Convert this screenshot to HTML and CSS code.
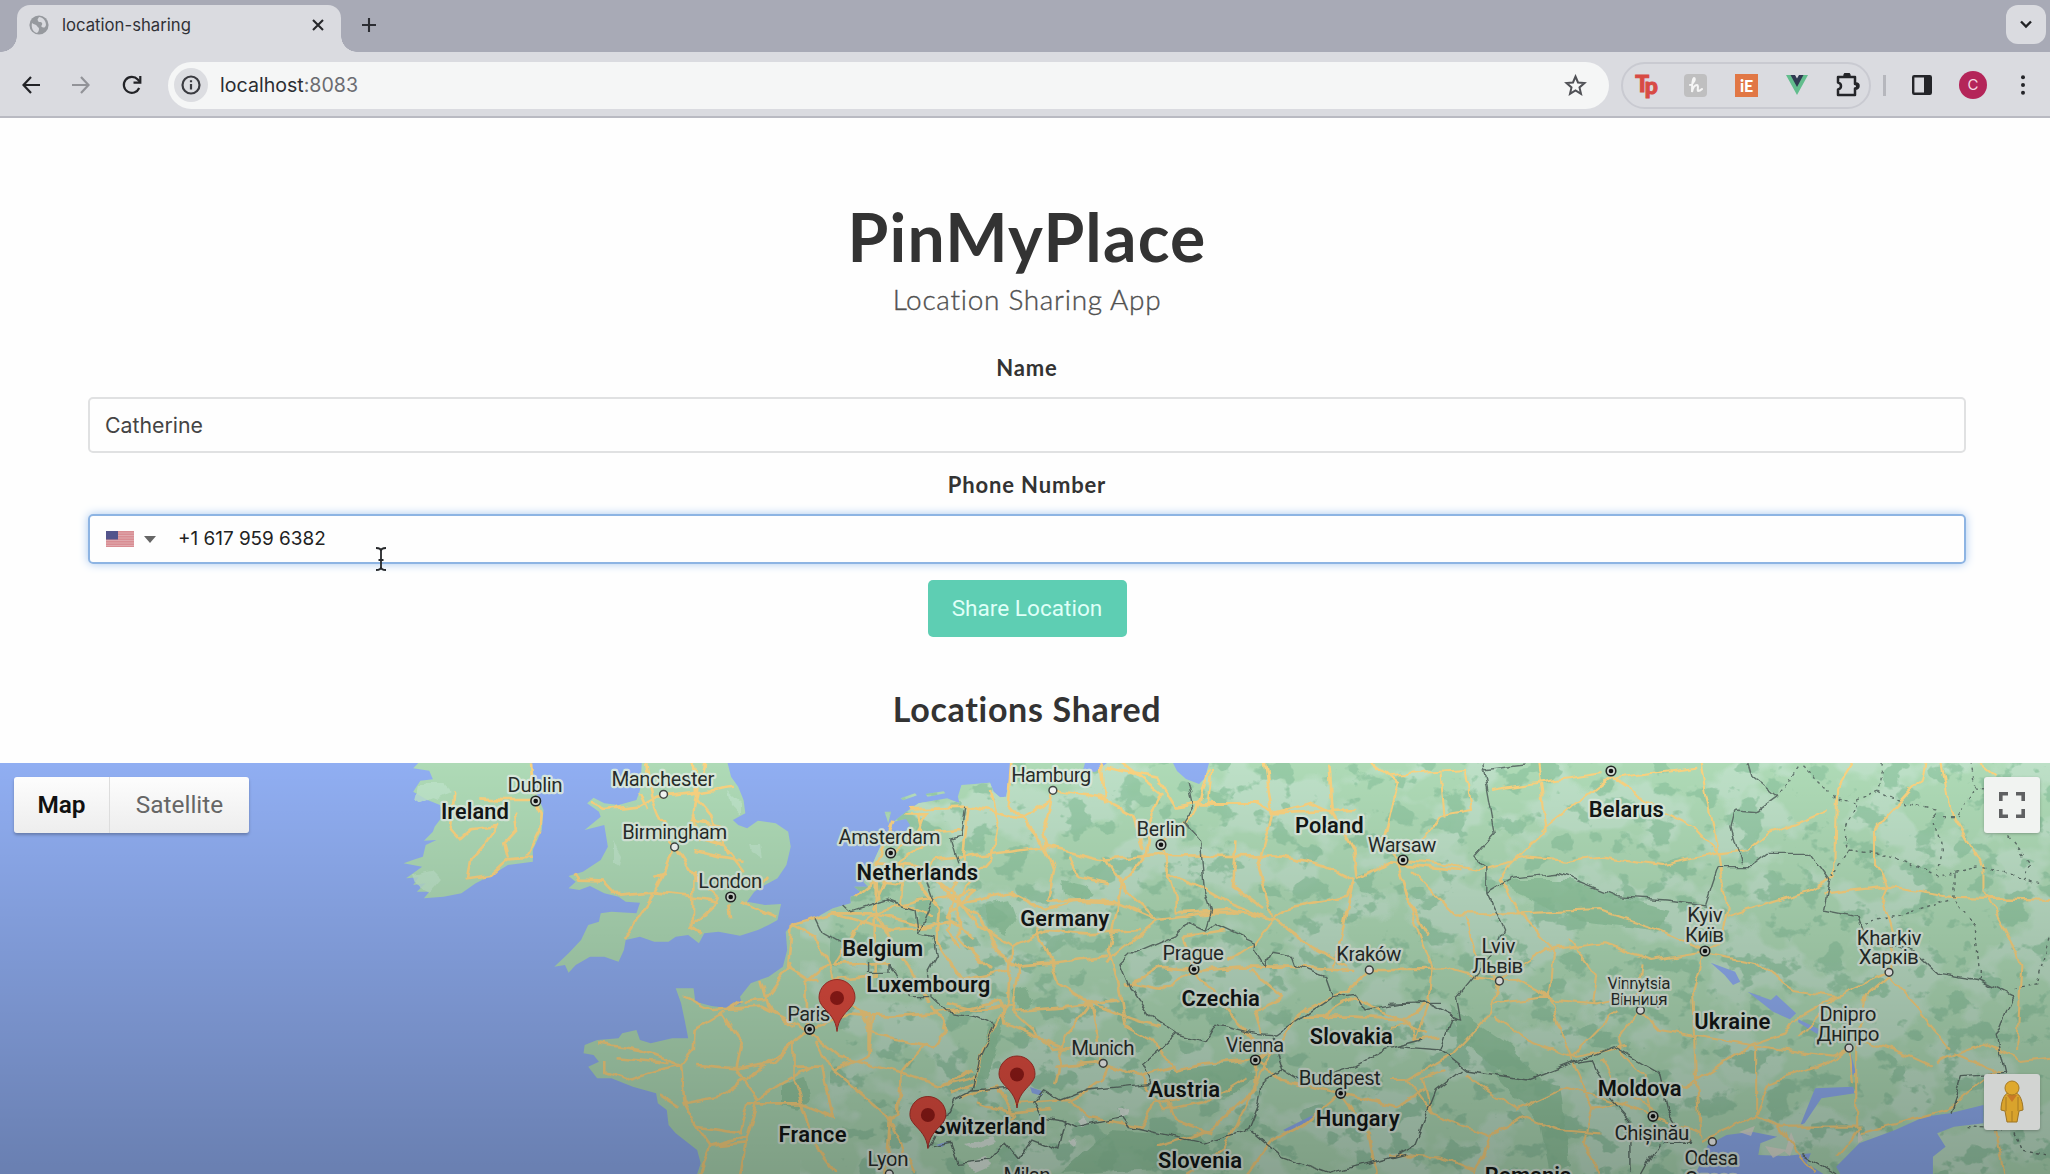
FILE: index.html
```html
<!DOCTYPE html>
<html lang="en">
<head>
<meta charset="utf-8">
<title>location-sharing</title>
<link rel="stylesheet" href="styles.css">
</head>
<body>
<header class="tabs">
  <div class="tab">
    <svg class="globe" width="20" height="20" viewBox="0 0 20 20"><circle cx="10" cy="10" r="9.6" fill="#96999e"/><path d="M3 8c2 2 4 1 5 3s2 1 2 3-1 3-2 4c-4-1-6-5-5-10zM10 2c-1 2-2 2-1 4s3 0 4 2-2 3 0 4 3 1 4-2c0-4-3-8-7-8z" fill="#d9dadf"/></svg>
    <span class="tab-title">location-sharing</span>
    <svg width="12" height="12" viewBox="0 0 12 12" stroke="#26272b" stroke-width="2.1"><path d="M1 1l10 10M11 1L1 11"/></svg>
  </div>
  <svg class="plus" width="16" height="16" viewBox="0 0 16 16" stroke="#2c2d33" stroke-width="2.1"><path d="M8 1v14M1 8h14"/></svg>
  <button class="tab-search"><svg width="14" height="9" viewBox="0 0 14 9" fill="none" stroke="#202124" stroke-width="2.4"><path d="M2 1.5l5 5 5-5"/></svg></button>
</header>
<nav class="toolbar">
  <svg class="nav-icon" width="18" height="18" viewBox="0 0 18 18" fill="none" stroke="#222327" stroke-width="2.2"><path d="M18 9H2M9 1L1.5 9 9 17"/></svg>
  <svg class="nav-icon" width="18" height="18" viewBox="0 0 18 18" fill="none" stroke="#929398" stroke-width="2.2"><path d="M0 9h16M9 1l7.500 8L9 17"/></svg>
  <svg class="nav-icon reload" width="20" height="20" viewBox="0 0 20 20" fill="none" stroke="#222327" stroke-width="2.2"><path d="M17.200 13A8 8 0 1 1 15.800 4.500L18 7"/><path d="M18.300 1v6.700H11.500"/></svg>
  <div class="omnibox">
    <span class="info"><svg width="20" height="20" viewBox="0 0 20 20" fill="none" stroke="#3a3b40" stroke-width="2.200"><circle cx="10" cy="10" r="8.500"/><path d="M10 9v5.500M10 5.200v2"/></svg></span>
    <span class="url">localhost<span class="port">:8083</span></span>
    <svg width="23" height="22" viewBox="0 0 23 22" fill="none" stroke="#505156" stroke-width="2"><path d="M11.500 2.500l2.500 6 6.500.6-5 4.300 1.500 6.400-5.500-3.400-5.500 3.400 1.500-6.400-5-4.300 6.500-.6z"/></svg>
  </div>
  <div class="extensions">
    <span class="tp">T<b>p</b></span>
    <span class="honey"><svg width="14" height="18" viewBox="0 0 14 18" fill="none" stroke="#f5f5f5" stroke-width="2" stroke-linecap="round"><path d="M1 9c4-1 6-7 4-7S3 10 3 16c1-5 3-7 5-7s0 6 1 6 3-1 4-2"/></svg></span>
    <span class="ie">iE</span>
    <svg class="vue" width="22" height="20" viewBox="0 0 22 20"><path d="M0 0h5l6 10 6-10h5L11 20z" fill="#62bd8d"/><path d="M4.500 0H9l2 3.500L13 0h4.500L11 12z" fill="#303a52"/></svg>
    <svg class="puzzle" width="24" height="24" viewBox="0 0 24 24" fill="none" stroke="#242529" stroke-width="2.500"><path d="M2 4h17v7a2 2 0 0 1 0 4.500V22H2v-5.500c4-1 4-6 0-7z" stroke-linejoin="round"/><path d="M8.500 3a2.500 2.500 0 0 1 5 0M20 10.500a2.500 2.500 0 0 1 0 5" fill="#242529"/></svg>
  </div>
  <i class="divider"></i>
  <svg class="panel" width="20" height="20" viewBox="0 0 20 20"><rect x="1.200" y="1.200" width="17.600" height="17.600" rx="1" fill="none" stroke="#242529" stroke-width="2.400"/><path d="M12 1h7v18h-7z" fill="#242529"/></svg>
  <span class="avatar">C</span>
  <svg class="dots" width="4" height="20" viewBox="0 0 4 20" fill="#242529"><circle cx="2" cy="2.200" r="2"/><circle cx="2" cy="10" r="2"/><circle cx="2" cy="17.800" r="2"/></svg>
</nav>
<main class="page">
  <h1 class="title">PinMyPlace</h1>
  <p class="subtitle">Location Sharing App</p>
  <label class="label name-label">Name</label>
  <div class="input">Catherine</div>
  <label class="label phone-label">Phone Number</label>
  <div class="phone">
    <svg width="28" height="16" viewBox="0 0 28 16"><path fill="#d98d93" d="M0 0h28v16H0z"/><path stroke="#e0a9ae" stroke-width="1.100" d="M0 2h28M0 4.500h28M0 7h28M0 9.500h28M0 12h28M0 14.500h28"/><path fill="#53548c" d="M0 0h12v8.500H0z"/></svg>
    <i class="caret"></i>
    <span class="number">+1 617 959 6382</span>
  </div>
  <button class="share">Share Location</button>
  <h2 class="heading">Locations Shared</h2>
</main>
<section class="map">
  <svg class="tiles" width="2050" height="411" viewBox="0 763 2050 411">
    <defs>
      <filter id="woods" x="0" y="0" width="100%" height="100%" color-interpolation-filters="sRGB"><feTurbulence type="fractalNoise" baseFrequency=".034 .042" numOctaves="4" seed="8"/><feColorMatrix values="0 0 0 0 .57  0 0 0 0 .78  0 0 0 0 .64  16 0 0 0 -9.200"/></filter>
      <filter id="fields" x="0" y="0" width="100%" height="100%" color-interpolation-filters="sRGB"><feTurbulence type="fractalNoise" baseFrequency=".014 .018" numOctaves="4" seed="23"/><feColorMatrix values="0 0 0 0 .74  0 0 0 0 .88  0 0 0 0 .78  0 10 0 0 -4.800"/></filter>
      <filter id="wiggle" filterUnits="userSpaceOnUse" x="0" y="740" width="2050" height="450" color-interpolation-filters="sRGB"><feTurbulence type="fractalNoise" baseFrequency=".06" numOctaves="2" seed="4"/><feDisplacementMap in="SourceGraphic" scale="9" xChannelSelector="R" yChannelSelector="G"/></filter>
      <g id="capital"><circle r="4.800" fill="#d5ded6" stroke="#252827" stroke-width="1.600"/><circle r="2.300" fill="#111"/></g>
      <circle id="town" r="3.900" fill="#f4f6f4" stroke="#444947" stroke-width="1.500"/>
      <g id="pin"><path d="M0 0C-1-12-8-18-13-23.500-16-27-18-30-18-34a18 18 0 1 1 36 0c0 4-2 7-5 10.500C8-18 1-12 0 0z" fill="#dd4b3e" stroke="#a8322a"/><circle cy="-33.500" r="7" fill="#941b18"/></g>
      <clipPath id="land">
        <path transform="translate(390 750) scale(.35714 .33333)" d="M80 38L65 55 110 62 120 88 85 92 65 125 105 150 140 165 150 195 125 230 120 245 95 272 130 270 100 285 92 320 70 328 38 340 90 350 45 385 80 382 65 405 100 400 75 425 110 425 95 445 150 440 200 430 240 400 285 375 330 345 400 335 400 300 425 240 430 180 410 130 400 60 395 38ZM705 38L700 120 690 150 640 165 600 160 570 143 552 160 585 185 590 200 545 240 600 225 610 290 590 330 540 365 500 378 520 395 500 415 530 420 560 408 600 430 640 440 660 455 700 458 690 490 620 485 590 490 585 515 555 525 535 570 500 610 460 650 490 645 500 668 520 645 560 620 600 620 640 635 655 600 660 570 700 560 740 575 780 575 800 560 835 555 865 580 880 550 920 545 980 557 1030 540 1060 525 1085 510 1095 462 1050 465 1000 455 1020 425 1050 405 1085 385 1110 345 1122 290 1115 245 1080 220 1030 212 1000 235 975 225 960 210 995 190 990 150 975 110 955 80 945 38ZM1740 38L1735 80 1725 140 1708 142 1690 125 1680 98 1600 105 1590 140 1595 160 1560 145 1480 160 1440 190 1410 215 1390 250 1360 320 1340 370 1325 395 1338 410 1300 410 1322 430 1290 440 1290 460 1240 475 1190 505 1125 525 1108 545 1112 600 1100 650 1060 680 1010 700 980 740 985 760 950 775 900 768 855 755 850 715 800 715 815 760 825 810 835 865 790 865 730 880 700 870 690 840 650 850 640 865 580 870 545 885 542 910 570 915 585 935 555 950 580 985 620 985 680 1010 745 1030 750 1060 775 1080 780 1125 800 1150 860 1200 870 1240 860 1272 4700 1272 4700 38ZM1385 185h18l-8 35zM1430 145l40-15 5 6-38 15zM1500 132l50-8 5 6-50 10z"/>
      </clipPath>
      <linearGradient id="shade" x2="0" y2="1"><stop stop-color="#000" stop-opacity="0"/><stop offset="1" stop-color="#000" stop-opacity=".27"/></linearGradient>
    </defs>
    <rect y="763" width="2050" height="411" fill="#90aef2"/>
    <g clip-path="url(#land)">
      <rect y="763" width="2050" height="411" fill="#aedab6"/>
      <rect x="800" y="763" width="1250" height="411" filter="url(#fields)"/>
      <rect x="830" y="763" width="1220" height="411" filter="url(#woods)" opacity=".8"/>
    </g>
    <!-- forests and peaks -->
    <g fill="#8fc69e" opacity=".8" filter="url(#wiggle)">
      <path d="M984 904l26-5 8 22-12 14-15-8zM782 1085l22-8 6 22-12 10-16-4zM1063 880l22 6 12 10-18 4-14-8zM1011 990l16-4 6 14-14 12zM985 1040l10-20 10-5-8 30-10 35-8-2zM1170 1070l70-8 16 15-30 20-70 2zM1450 1005l60 40 30 35-20 5-60-45zM1490 1070l70 15 10 80-20 9-10-50zM1500 880l70 0 60 20 40 10-10 20-80-10-60-25zM1110 1130l90 5 20 20-60 14-100 5z"/>
    </g>
    <g fill="#e6ece8" opacity=".8" filter="url(#wiggle)"><path d="M965 1144l28-8 4 5-24 8zM968 1164l18-7 3 10-14 6zM1076 1120l8-4 5 8-9 4zM1118 1109l12-1-2 6-8 3zM1067 1142l8-4-2 9z"/></g>
    <g fill="#bfe4ca" opacity=".8" filter="url(#wiggle)"><path d="M426 782l18 0 6 12-12 6-14-6zM418 784l14 0 6 12-18 8-6-4zM413 874l20-4 8 8-12 14-12-6zM613 842l8 14-2 10-6-4zM750 845l10 0 2 12-10-6zM728 792l12 10 0 12-9-10z"/></g>
    <!-- inland and southern waters -->
    <g fill="#90aef2" transform="translate(1390 750) scale(.42088 .33333)">
      <path d="M725 1272L740 1235 755 1185 800 1155 860 1145 920 1160 880 1180 875 1215 940 1218 1000 1210 990 1240 1030 1272ZM1060 1250L1115 1180 1200 1140 1270 1100 1330 1090 1410 1065 1410 1120 1340 1130 1300 1150 1320 1190 1290 1220 1290 1272 1070 1272ZM762 638L820 665 832 695 815 705 795 675ZM850 725L905 750 918 735 965 790 950 808 910 785ZM970 808l50 30-5 14-45-35zM975 1125l35-110 90-5 5 20-80 15-40 75zM1095 910l12 60-8 5z"/>
    </g>
    <g fill="#90aef2"><path d="M1085 763h22l-12 9-12-2zM1173 763h36l-4 15-6 6-13-5-9-8zM1030 1087l12 4 0 5-10-3zM936 1145l14-4-8 6zM1283 1130l30-15-2 5-24 12zM892 822l14-3 4 6-8 12-8 10-4-8z"/></g>
    <g fill="#e3ded4" opacity=".8"><path d="M1739 1132l16-6-4 10zM1765 1146l22 4-14 8zM1791 1132l4 10-5 14-5-4zM1858 1128l5 12-5 3z"/></g>
    <!-- motorways -->
    <g filter="url(#wiggle)" fill="none" stroke="#f9d280" stroke-width="2.600" stroke-linejoin="round">
      <g transform="translate(390 750) scale(.35714 .33333)">
        <path vector-effect="non-scaling-stroke" d="M180 130L170 240 195 270 230 235 300 225 260 290 225 330 215 385 280 375 330 325 400 320M250 145L320 150 405 150 425 190 420 240 385 315M350 190L355 240 320 280 330 320M395 40L400 130M560 160L600 180 700 170 750 140 850 130 960 110M700 130L720 180M720 38L735 140 760 210 797 290M850 38L860 130 850 210 930 225M850 190L870 270 940 290 990 360M880 38L860 150 900 200 945 310M797 290L775 350 740 430 690 510 655 570M800 290L860 390 920 450M740 430L840 440 920 455M520 370L530 392 600 395 640 440 740 430M740 378L775 365M850 300L990 330M920 455L845 530 870 548M850 360L848 530M985 455L1020 475 1085 500M950 460L955 505M980 420L1060 385"/>
        <path vector-effect="non-scaling-stroke" d="M1125 525L1115 650 1175 690 1200 690M1125 640L1050 750 990 755M985 750L930 790 850 840 848 900 815 945 700 900 580 880M815 945L750 960 660 990 600 970 600 930M815 945L825 1060 920 1040 1030 960 1130 880 1175 838M860 945L970 955 1080 935 1130 880M930 790L985 880 970 955 1000 1010 1030 1050 1000 1160 980 1272M825 1060L860 1130 900 1190 1000 1160M825 740L900 780 1040 770 1170 838M1040 690L1060 770 1130 830M1170 838L1165 700 1230 640 1190 560 1125 525M1175 838L1290 790 1400 800 1520 790 1600 780M1180 850L1260 920 1430 970 1540 1010 1630 960M1190 870L1240 960 1390 1095 1440 1200 1470 1272M1130 880L1130 990 1155 1070 1180 1170 1250 1272M1000 1060L1150 1060 1240 1100 1210 950 1130 950M1240 960L1340 920 1350 800 1320 780M1430 970L1425 1090 1400 1100 1390 1272M1030 1050L1100 1000 1180 950M860 1130L980 1150 1000 1060M870 1272L900 1190 1000 1180M750 1030L810 1070M640 925L780 940M1230 640L1260 740 1340 790 1340 920"/>
        <path vector-effect="non-scaling-stroke" d="M1125 525L1240 490 1360 490 1480 450 1560 440 1600 460 1740 430 1830 480 1920 455 2040 460 2150 510 2300 490 2400 490M1360 490L1360 680 1240 690M1360 490L1420 600 1515 760M1360 490L1300 540 1240 640 1400 640M1240 490L1400 540 1520 530M1360 390L1360 490 1500 530 1570 510M1410 215L1360 340 1500 350 1570 440 1640 420M1402 309L1480 250 1600 240M1480 185L1500 280 1420 340 1300 440M1450 175L1620 170 1700 190 1760 205 1850 150 1855 120M1480 250L1500 190 1440 190M1620 170L1600 360 1560 440M1680 120L1700 220 1680 330 1590 440 1640 520 1740 590 1730 750 1700 820 1660 900 1640 1000 1570 1030M1740 38L1730 160 1770 205 1840 300 1860 360 1840 455M1340 390L1430 400 1530 330 1700 310 1840 290 1990 330 2150 315 2500 320 2620 350 2700 390 2680 490 2660 590 2640 650"/>
        <path vector-effect="non-scaling-stroke" d="M1855 121L1850 160 1830 240 1840 290M1856 121L1980 140 2080 195 2110 300M1990 38L2000 160M2000 50L2150 80 2200 170 2250 160 2430 160M2050 38L2160 130 2130 210 2120 310 2050 400 2040 460 2010 600 2040 700 2060 830 2130 870 2200 960 2280 940 2400 930 2480 900 2560 770M2159 284L2180 370 2200 440 2200 490 2350 480 2480 510 2580 590 2680 650M2180 370L2270 410 2350 460 2470 510M2470 510L2500 480 2680 440 2700 390M1900 320L1930 380 2010 400M2000 320L2060 420 2150 510 2000 640M1790 480L1840 600 1870 700 1960 760 2060 800 2150 830M1740 590L1840 540 1950 550 2100 540M1760 650L1860 640 2010 620M1840 455L1950 450 2030 455M1570 440L1650 500 1700 600 1760 650 1740 780 1880 770 2040 750M1960 760L1890 860 1860 1000M1740 780L1860 900 1940 890M1860 950L1990 940 2100 980 2200 950M1960 760L1980 860 1990 940M1600 780L1710 750 1720 820 1900 900"/>
        <path vector-effect="non-scaling-stroke" d="M1510 370L1580 430 1560 540 1600 600M1460 370L1540 480 1530 580 1600 690 1740 660M1590 430L1590 560 1680 660M1640 420L1560 500 1640 570M1360 340L1370 450M1400 360L1350 480M1440 340L1430 460 1520 500M1560 760L1640 780 1740 760M1320 780L1350 850 1520 890 1560 840 1520 770M1430 970L1500 880M1540 1010L1640 980M1600 1040L1700 1010 1750 1100 1700 1150M1750 1060L1900 1050 1960 1100 2100 1130 2140 1060 2230 1040M1640 1060L1740 1090 1850 1080M1900 1060L1990 990 2010 950M2150 990L2200 1110 2300 1150M2100 980L2170 1080 2280 1060 2400 980M2250 660L2150 650 2080 700M2250 660L2160 720 2060 700M2250 660L2380 650 2520 650 2700 660M2250 660L2350 790 2420 870M2250 658L2220 560 2340 540M2350 630L2420 580 2470 510M2410 660L2500 740 2420 780 2440 850M2423 930L2480 900 2440 960 2390 1080 2330 1200 2230 1272M2423 930L2420 1020 2300 1140 2150 1190M2423 930L2500 990 2662 1030 2740 1150 2760 1272M2662 1030L2820 1070 2900 1020M2662 1030L2560 1120 2470 1170 2400 1272M2560 800L2700 800 2850 810 2900 760M2560 780L2680 720 2742 660 2900 660M2610 800L2700 740 2900 850"/>
        <path vector-effect="non-scaling-stroke" d="M2630 38L2640 190 2700 300 2710 390M2450 38L2470 190 2430 350 2470 500M2300 60L2290 160 2420 160 2470 190 2700 180M2370 280L2360 410 2450 480M2159 284L2260 180 2290 60M2710 390L2800 340 3000 360M2640 190L2580 160 2470 190M2750 38L2820 100 2780 280 2820 330M2820 330L2850 450 2910 560"/>
      </g>
      <g transform="translate(1390 750) scale(.42088 .33333)" stroke-width="2.100">
        <path vector-effect="non-scaling-stroke" d="M0 75L180 60 195 180 120 195 60 300M31 330L120 340 210 360 320 325 420 335 500 320 650 345 780 310M120 70L130 200M350 38L370 240 280 350 260 390 310 490 390 600 380 740 400 830 430 920 480 1070 460 1180M525 80L360 240M525 80L640 180 720 230 780 310 800 480 780 580 749 600M530 85L730 50M240 120L500 70M740 38L780 310 850 300 900 250 1040 180M1100 38L1060 120 1055 380 1000 420 800 500M1270 38L1260 90 1150 240 1150 340 1180 410 1170 440 1195 540 1186 660M1310 38L1330 180 1410 350 1410 420 1500 640 1490 900M1030 430L1180 410 1330 440 1568 450M1400 40L1440 80M20 350L60 520 100 650 90 760 60 870M50 360L150 490 310 490 500 480 640 540 749 600M180 500L210 620 260 690M0 660L130 655 200 680 300 690 390 750 490 760 610 730M260 690L240 790 150 910 40 990 0 990M260 690L370 600 510 580 620 630 740 605M250 760L380 740M250 800L340 880 430 920 540 780M595 781L640 840 860 885 940 850 960 810 1060 740 1180 670M595 781L540 870 550 910M430 570L490 680 480 760M749 610L870 640 960 720 1060 740M749 610L720 720 730 1000 740 1160M1186 680L1250 770 1330 900M1186 680L1130 740 1110 900 1110 1130M860 885L1050 920 1091 895M860 885L700 1010 640 1000M870 890L870 1100 920 1130 1120 1130M1091 895L1100 1000M1091 895L1040 940 900 1000 870 1100 740 1170M1120 870L1220 910 1290 950M1300 940L1410 880 1500 930 1568 920M1340 910L1450 970M1440 960L1320 1080 1120 1150M920 1130L1010 1270M1120 1130L1060 1220M1440 1140L1460 1272M0 830L50 820 60 870 120 860M40 990L100 1090 240 1160 310 1100 400 1140 500 1150M240 1160L200 1272M180 970L230 1020 300 1080 420 1010 540 1060 625 1099M500 930L540 1010 630 1080M550 910L600 980 620 1090M630 1100L740 1150M480 1070L560 1060M430 920L560 890M0 1210L120 1220 200 1260M100 1090L80 980 130 960M460 1180L500 1272M1060 740L970 860M600 640L590 770"/>
      </g>
    </g>
    <!-- national borders -->
    <g filter="url(#wiggle)" fill="none" stroke="#60736b" stroke-width="1.400">
      <g transform="translate(390 750) scale(.35714 .33333)"><path vector-effect="non-scaling-stroke" d="M1612 170L1600 260 1570 270 1590 340M1500 390L1520 450 1500 500 1480 550 1520 560 1530 620 1510 660 1515 740 1560 785 1640 800 1695 825 1655 920 1635 1020M1270 465L1290 485 1390 450 1470 480 1480 550M1190 505L1210 550 1260 580M1340 630L1340 670 1400 670 1400 640 1450 740 1510 740M2235 95L2250 170 2220 220 2270 280 2280 420 2300 480 2285 540 2235 515 2200 555 2080 610 2050 640 2080 720 2130 800 2200 850 2280 875 2310 820 2420 850 2480 855 2570 790 2640 740 2620 680 2540 650 2530 620 2470 610 2450 650 2420 600 2420 575 2310 520 2285 540M2640 740L2700 730 2730 780 2830 760 2940 760M2200 850L2160 890 2105 940 2130 1000 2050 1010 1950 1020 1880 1050 1830 1020 1800 1060 1820 1100 1880 1110 1920 1130 2050 1100 2070 1130 2280 1180 2400 1140 2430 1060 2440 1000 2500 960 2470 860M2500 960L2560 1000 2700 950 2780 900 2890 870M2410 1140L2500 1220 2630 1270 2840 1210M1635 1020L1580 1050 1560 1100 1510 1190M1635 1020L1760 1010M1520 1190L1570 1180 1590 1240 1680 1230 1720 1180 1760 1230 1800 1170 1870 1200 1890 1110"/></g>
      <g transform="translate(1390 750) scale(.42088 .33333)"><path vector-effect="non-scaling-stroke" d="M220 38L250 250 200 320 230 350 230 430 270 540 250 600 160 740 170 810 145 805 120 900 180 960 330 990 430 940 530 890 640 970 660 1080 710 1180 650 1180M230 430L290 385 400 370 540 440 660 450 750 465 780 350 860 350 900 310 1000 310 1045 390 1030 480 1110 500 1130 570 1240 600 1300 670 1400 690 1480 740 1440 860 1460 970 1360 980 1330 1090M850 38L860 80 920 140 870 185 820 180 810 230 835 340M0 760L80 755 170 810M120 900L20 890M170 960L110 1020 60 1180 0 1220M430 940L480 930 520 1040 570 1110 570 1272M640 1180L600 1272M220 60L320 45M980 1210L1060 1272"/>
      <path vector-effect="non-scaling-stroke" stroke-dasharray="3 4" d="M970 50L920 140M980 50L1060 150 1110 160 1080 250 1090 300 1050 380M1170 38L1160 120 1100 155M1160 120L1200 150 1290 180 1310 300 1300 360M1380 38L1390 110 1350 200 1310 200M1390 110L1450 130 1470 260 1520 340 1510 370M1090 300L1200 320 1300 380 1400 350 1540 400M1340 370L1340 450 1390 520 1400 660 1400 690M1110 520L1200 500 1330 450M1568 560L1540 700 1480 720M1370 1130L1480 1140 1500 1200 1568 1220"/></g>
    </g>
    <!-- city symbols -->
    <g>
      <use href="#capital" x="535.700" y="801"/><use href="#capital" x="730.700" y="897"/><use href="#capital" x="890.700" y="853"/><use href="#capital" x="809.600" y="1029.300"/><use href="#capital" x="1161" y="844.700"/><use href="#capital" x="1194" y="969.300"/><use href="#capital" x="1255.400" y="1060"/><use href="#capital" x="1340.700" y="1093.300"/><use href="#capital" x="1403" y="860"/><use href="#capital" x="1611" y="771"/><use href="#capital" x="1705" y="951"/><use href="#capital" x="1653" y="1116.300"/>
      <use href="#town" x="663.600" y="794.300"/><use href="#town" x="674.600" y="847"/><use href="#town" x="1052.900" y="790.300"/><use href="#town" x="1103.200" y="1063.300"/><use href="#town" x="1369.300" y="970"/><use href="#town" x="889.300" y="1174"/><use href="#town" x="1499.400" y="981"/><use href="#town" x="1640.400" y="1010.300"/><use href="#town" x="1889" y="972.300"/><use href="#town" x="1849" y="1048"/><use href="#town" x="1712.400" y="1141.700"/>
    </g>
    <g class="city" transform="translate(-.7 .6)">
      <text x="535.700" y="791.700" textLength="55">Dublin</text><text x="663.600" y="785.700" textLength="103">Manchester</text><text x="675.400" y="838" textLength="105">Birmingham</text><text x="731" y="887.300" textLength="64">London</text><text x="890.200" y="843.300" textLength="102">Amsterdam</text><text x="809.500" y="1020" textLength="43">Paris</text><text x="888.800" y="1165" textLength="41">Lyon</text><text x="1027.700" y="1181" textLength="47">Milan</text><text x="1052" y="781.700" textLength="80">Hamburg</text><text x="1161.800" y="835.300" textLength="49">Berlin</text><text x="1402.800" y="851" textLength="68.500">Warsaw</text><text x="1193.900" y="959.300" textLength="61.500">Prague</text><text x="1369.500" y="960.500" textLength="65">Kraków</text><text x="1103.600" y="1054.700" textLength="63.500">Munich</text><text x="1255.700" y="1051" textLength="58.500">Vienna</text><text x="1340.500" y="1084" textLength="82">Budapest</text>
      <text x="1705.700" y="921.700" textLength="35.500">Kyiv</text><text x="1705.300" y="941.300" textLength="39">Київ</text><text x="1499.200" y="952.700" textLength="34">Lviv</text><text x="1498.400" y="972.700" textLength="51">Львів</text><text class="small" x="1639.600" y="988" textLength="63">Vinnytsia</text><text class="small" x="1639.800" y="1004" textLength="57">Вінниця</text><text x="1889.800" y="944.300" textLength="64.500">Kharkiv</text><text x="1889.400" y="963.700" textLength="60">Харків</text><text x="1848.600" y="1020" textLength="57">Dnipro</text><text x="1848.700" y="1040" textLength="63">Дніпро</text><text x="1652.600" y="1139.300" textLength="75">Chișinău</text><text x="1712.200" y="1164" textLength="54">Odesa</text><text x="1712.200" y="1185" textLength="54">Одеса</text>
    </g>
    <g class="country" transform="translate(-.7 .6)">
      <text x="475.700" y="818" textLength="68">Ireland</text><text x="917.900" y="879.300" textLength="121.500">Netherlands</text><text x="883.400" y="955" textLength="81">Belgium</text><text x="929" y="991.700" textLength="124">Luxembourg</text><text x="813.200" y="1141.700" textLength="68">France</text><text x="989.500" y="1133.500" textLength="113">Switzerland</text><text x="1065.500" y="925" textLength="89">Germany</text><text x="1330" y="832.300" textLength="68.500">Poland</text><text x="1221.400" y="1005" textLength="78.500">Czechia</text><text x="1352" y="1043.300" textLength="83">Slovakia</text><text x="1185" y="1096.700" textLength="71.500">Austria</text><text x="1358.500" y="1125" textLength="84">Hungary</text><text x="1200.700" y="1167.300" textLength="84">Slovenia</text><text x="1627" y="816.700" textLength="75">Belarus</text><text x="1733" y="1028.300" textLength="76">Ukraine</text><text x="1640.400" y="1095.700" textLength="84">Moldova</text><text x="1528.900" y="1182" textLength="87">Romania</text>
    </g>
    <use href="#pin" x="837" y="1031.500"/><use href="#pin" x="1017" y="1108"/><use href="#pin" x="927.900" y="1148.500"/>
    <rect y="763" width="2050" height="411" fill="url(#shade)"/>
  </svg>
  <div class="map-type"><span class="active">Map</span><span class="satellite">Satellite</span></div>
  <button class="control fullscreen"><svg width="26" height="26" viewBox="0 0 26 26" fill="none" stroke="#5f6062" stroke-width="3.600"><path d="M1.800 9V1.800H9M17 1.800h7.200V9M24.200 17v7.200H17M9 24.200H1.800V17"/></svg></button>
  <button class="control pegman"><svg width="24" height="44" viewBox="0 0 24 44"><path d="M8 13C4 14 1 22 1 30l4 1 2 11h10l2-11 4-1c0-8-3-16-7-17z" fill="#d9a32c" stroke="#9d7423"/><path d="M6 17v14M18 17v14M12 31v11" stroke="#a77a22"/><path d="M7 15l5 7 5-7z" fill="#c97a27"/><circle cx="12" cy="8" r="7" fill="#dfa92e" stroke="#a77a22"/></svg></button>
</section>
<svg class="cursor" width="12" height="24" viewBox="0 0 12 24" fill="none" stroke="#26282b" stroke-width="1.800"><path d="M1 1c3 0 5 1 5 3v16c0 2-2 3-5 3M11 1C8 1 6 2 6 4v16c0 2 2 3 5 3M3.500 13h5"/></svg>
</body>
</html>
```
FILE: styles.css
```css
* { box-sizing: border-box; }
body { margin: 0; width: 2050px; height: 1174px; overflow: hidden; display: flex; flex-direction: column; background: #fefefe; font-family: Inter, sans-serif; position: relative; }
button { border: 0; padding: 0; font: inherit; }
svg { display: block; flex: none; }

.tabs { height: 52px; flex: none; background: #a8aab6; display: flex; padding: 5px 4px 0 17px; }
.tab { width: 324px; height: 47px; padding: 0 17px 8px 12px; background: #dadbe0; border-radius: 13px 13px 0 0; display: flex; align-items: center; gap: 13px; position: relative; }
.tab::before, .tab::after { content: ""; position: absolute; bottom: 0; width: 16px; height: 16px; }
.tab::before { left: -16px; background: radial-gradient(circle at 0 0, transparent 15.5px, #dadbe0 16px); }
.tab::after { right: -16px; background: radial-gradient(circle at 100% 0, transparent 15.5px, #dadbe0 16px); }
.tab-title { flex: 1; font-size: 16.7px; color: #303136; white-space: nowrap; }
.plus { margin: 12px 0 0 20px; }
.tab-search { width: 40px; height: 39px; margin-left: auto; border-radius: 12px; background: #dadbe0; display: grid; place-items: center; }

.toolbar { height: 66px; flex: none; background: #dadbe0; border-bottom: 2px solid #b9bac2; display: flex; align-items: center; padding: 2px 25px 0 22px; }
.nav-icon { margin-right: 32px; }
.reload { margin-right: 26px; }
.omnibox { width: 1442px; height: 47px; border-radius: 24px; background: #f5f6f6; display: flex; align-items: center; padding: 0 22px 0 6px; }
.info { width: 34px; height: 34px; border-radius: 50%; background: #dcdde1; display: grid; place-items: center; }
.url { flex: 1; margin-left: 12px; font-size: 19.6px; color: #2c2d31; }
.port { color: #6b6c71; }
.extensions { width: 250px; height: 47px; margin-left: 12px; border: 2px solid #c9cad1; border-radius: 24px; display: flex; align-items: center; padding: 0 9px 0 12px; justify-content: space-between; }
.tp { width: 21px; font: 900 23px/24px Lato, sans-serif; color: #d84a44; letter-spacing: -2px; -webkit-text-stroke: 1px #d84a44; transform: translateY(-2px); }
.tp b { position: relative; top: 2px; }
.honey, .ie { width: 23px; height: 23px; display: grid; place-items: center; }
.honey { background: #bfbfc0; border-radius: 4px; }
.ie { background: #e17745; color: #fff; font: 900 16px/23px Lato, sans-serif; }
.divider { width: 3px; height: 21px; margin: 0 26px 0 12px; background: #b6b7bd; }
.avatar { width: 28px; height: 28px; margin: 0 34px 0 27px; border-radius: 50%; background: #b42559; color: #f4d9e4; font-size: 15px; line-height: 28px; text-align: center; }

.page { height: 645px; flex: none; padding: 77px 84px 0 88px; display: flex; flex-direction: column; align-items: center; color: #333; font-family: Lato, sans-serif; }
.title { margin: 0; font-size: 66px; line-height: 84px; font-weight: 700; letter-spacing: 1.2px; }
.subtitle { margin: 2px 0 0; font-size: 28px; line-height: 36px; font-weight: 300; color: #505050; letter-spacing: .7px; -webkit-text-stroke: .35px #505050; }
.label { font-size: 22px; line-height: 28px; font-weight: 700; letter-spacing: .85px; }
.name-label { margin-top: 37px; }
.input { width: 100%; height: 56px; margin-top: 15px; border: 2px solid #e0e1e2; border-radius: 5px; padding: 0 15px; font: 400 21.3px/52px Inter, sans-serif; color: #444; }
.phone-label { margin-top: 18px; }
.phone { width: 100%; height: 50px; margin-top: 15px; border: 2px solid #8db4e3; border-radius: 5px; box-shadow: 0 0 10px #a9c9f0; display: flex; align-items: center; padding: 0 16px; }
.caret { border: 6px solid transparent; border-top: 7px solid #666; border-bottom: 0; margin: 0 22px 0 10px; }
.number { font: 400 18.9px/46px Inter, sans-serif; color: #222; }
.share { width: 199px; height: 57px; margin-top: 15px; border-radius: 5px; background: #5eceb3; color: #dffff7; font: 400 22.6px/57px Roboto, sans-serif; position: relative; top: 1px; }
.heading { margin: 52px 0 0; font-size: 34px; line-height: 42px; letter-spacing: .7px; font-weight: 700; }

.map { flex: 1; position: relative; font-family: Roboto, sans-serif; }
.city text, .country text { text-anchor: middle; paint-order: stroke; stroke: #dcebdf; stroke-opacity: .95; stroke-width: 4.5px; stroke-linejoin: round; }
.city { font-size: 20.5px; fill: #282d2b; }
.city .small { font-size: 17px; }
.country { font-size: 22px; font-weight: 600; fill: #141817; }
.map-type { position: absolute; left: 14px; top: 14px; width: 235px; height: 56px; background: linear-gradient(#fdfdfd, #ededed); border-radius: 3px; box-shadow: 0 2px 3px rgba(0, 0, 0, .25); display: flex; align-items: center; font-size: 24.4px; line-height: 56px; }
.active { width: 96px; text-align: center; font-weight: 600; color: #111; border-right: 1px solid #ddd; }
.satellite { flex: 1; text-align: center; color: #666; }
.control { position: absolute; right: 10px; width: 56px; height: 56px; border-radius: 3px; background: #f1f3f1; box-shadow: 0 1px 3px rgba(0, 0, 0, .25); display: grid; place-items: center; }
.fullscreen { top: 14px; }
.pegman { top: 311px; background: #d2d4d2; }
.cursor { position: absolute; left: 375px; top: 547px; }
```
